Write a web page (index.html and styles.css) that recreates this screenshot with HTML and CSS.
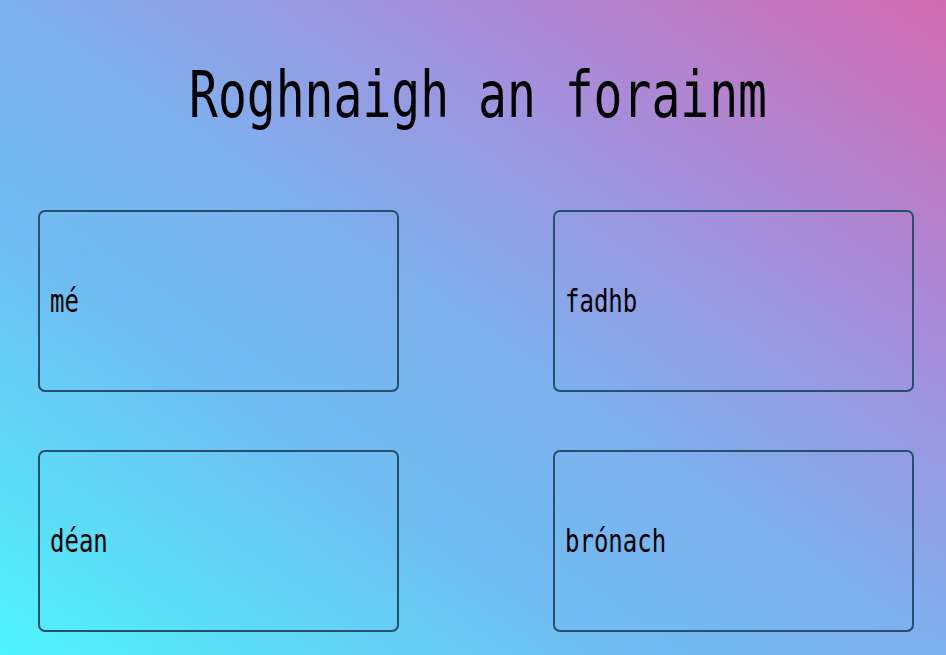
FILE: index.html
```html
<!DOCTYPE html>
<html lang="ga">
<head>
<meta charset="utf-8">
<title>Roghnaigh an forainm</title>
<link rel="stylesheet" href="styles.css">
</head>
<body>
<main class="page">
  <header class="header">
    <h1 class="title"><span class="stretch">Roghnaigh an forainm</span></h1>
  </header>
  <section class="options">
    <button class="option"><span class="stretch">mé</span></button>
    <button class="option"><span class="stretch">fadhb</span></button>
    <button class="option"><span class="stretch">déan</span></button>
    <button class="option"><span class="stretch">brónach</span></button>
  </section>
</main>
</body>
</html>
```
FILE: styles.css
```css
html, body {
  margin: 0;
  padding: 0;
}
body {
  font-family: "DejaVu Sans Mono", "Liberation Mono", monospace;
  color: #000;
}
.page {
  box-sizing: border-box;
  width: 946px;
  height: 655px;
  overflow: hidden;
  padding: 0 32px 0 38px;
  background: linear-gradient(to top right, #4ef4fb 0%, #6fbdf2 32%, #7eb0ee 50%, #a48fdc 72%, #d26ab0 100%);
}
.header {
  box-sizing: border-box;
  height: 210px;
  padding-top: 67px;
  text-align: center;
}
.title {
  margin: 0;
  padding-left: 4px;
  font-size: 48px;
  line-height: 56px;
  font-weight: normal;
}
.stretch {
  display: inline-block;
  transform: scaleY(1.32);
}
.options {
  display: grid;
  grid-template-columns: 361px 361px;
  grid-auto-rows: 182px;
  justify-content: space-between;
  row-gap: 58px;
}
.option {
  display: flex;
  align-items: center;
  box-sizing: border-box;
  margin: 0;
  padding: 0 0 0 10px;
  background: transparent;
  border: 2px solid #264f6e;
  border-radius: 7px;
  font-family: inherit;
  font-size: 24px;
  line-height: 28px;
  color: #000;
  text-align: left;
  cursor: pointer;
}
.option .stretch {
  transform: scaleY(1.36);
}
```
